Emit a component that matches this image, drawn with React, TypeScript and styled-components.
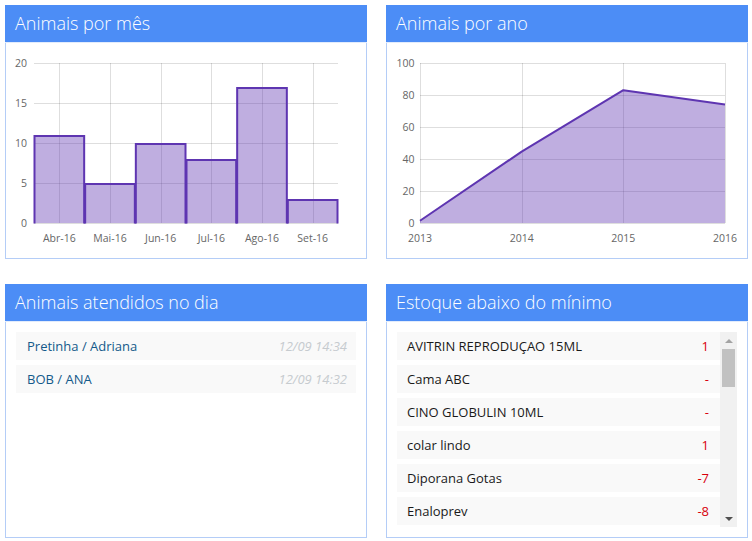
import React from "react";
import styled, { createGlobalStyle } from "styled-components";

const Global = createGlobalStyle`
  html, body { margin: 0; padding: 0; background: #fff; }
  body { font-family: "Open Sans", "Liberation Sans", sans-serif; }
  * { box-sizing: border-box; }
`;

const Page = styled.div`
  display: grid;
  grid-template-columns: 362px 362px;
  grid-auto-rows: 254px;
  column-gap: 19px;
  row-gap: 25px;
  padding: 5px;
`;

const Panel = styled.section`
  display: flex;
  flex-direction: column;
  height: 254px;
`;

const Header = styled.header`
  height: 38px;
  background: #4c8df6;
  border-bottom: 1px solid #e2ecfc;
  color: #fff;
  font-size: 18px;
  line-height: 37px;
  padding-left: 10px;
  font-weight: 300;
  white-space: nowrap;
`;

const Body = styled.div<{ $pad?: boolean }>`
  flex: 1;
  border: 1px solid #b4cdf7;
  border-top: none;
  padding: ${(p) => (p.$pad ? "10px" : "0")};
  display: flex;
  flex-direction: column;
  min-height: 0;
`;

const ChartSvg = styled.svg`
  display: block;
  font-family: "Open Sans", "Liberation Sans", sans-serif;
  font-size: 10.5px;
`;

const List = styled.div`
  display: flex;
  flex-direction: column;
  gap: 5px;
`;

const Row = styled.div`
  height: 28px;
  background: #f9f9f9;
  display: flex;
  align-items: center;
  justify-content: space-between;
  padding: 0 9px 0 11px;
  font-size: 13px;
  white-space: nowrap;
`;

const PetName = styled.span`
  color: #145a8a;
`;

const Time = styled.span`
  color: #c6cbcf;
  font-style: italic;
`;

const ScrollArea = styled.div`
  height: 195px;
  display: flex;
`;

const ScrollRows = styled.div`
  flex: 1;
  overflow: hidden;
  display: flex;
  flex-direction: column;
  gap: 5px;
`;

const StockRow = styled(Row)`
  flex: none;
  padding: 0 11px 0 10px;
`;

const ItemName = styled.span`
  color: #1a1a1a;
`;

const Qty = styled.span`
  color: #d8000c;
`;

const Scrollbar = styled.div`
  width: 17px;
  background: #f1f1f1;
  display: flex;
  flex-direction: column;
  align-items: center;
`;

const Arrow = styled.div<{ $down?: boolean }>`
  height: 17px;
  width: 17px;
  display: flex;
  align-items: center;
  justify-content: center;
  margin-top: ${(p) => (p.$down ? "auto" : "0")};
  &::after {
    content: "";
    width: 0;
    height: 0;
    border-left: 4px solid transparent;
    border-right: 4px solid transparent;
    ${(p) =>
      p.$down
        ? "border-top: 4px solid #505050;"
        : "border-bottom: 4px solid #a3a3a3;"}
  }
`;

const Thumb = styled.div`
  width: 13px;
  height: 38px;
  background: #c1c1c1;
`;

const PURPLE = "#5e35b1";
const FILL = "rgba(94,53,177,0.4)";
const GRID = "rgba(0,0,0,0.13)";
const TXT = "#666";

const months = [
  { l: "Abr-16", v: 11 },
  { l: "Mai-16", v: 5 },
  { l: "Jun-16", v: 10 },
  { l: "Jul-16", v: 8 },
  { l: "Ago-16", v: 17 },
  { l: "Set-16", v: 3 },
];

function MonthChart() {
  const x0 = 28;
  const x1 = 332;
  const y0 = 180;
  const top = 20;
  const bw = (x1 - x0) / months.length;
  const ticks = [0, 5, 10, 15, 20];
  return (
    <ChartSvg width={360} height={215} viewBox="0 0 360 215">
      {ticks.map((t) => {
        const y = y0 - t * 8 + 0.5;
        return (
          <g key={t}>
            <line x1={x0} x2={x1} y1={y} y2={y} stroke={GRID} />
            <text x={21} y={y + 3.5} textAnchor="end" fill={TXT}>
              {t}
            </text>
          </g>
        );
      })}
      {months.map((m, i) => {
        const cx = Math.round(x0 + bw * (i + 0.5)) + 0.5;
        return (
          <line key={m.l} x1={cx} x2={cx} y1={top} y2={y0} stroke={GRID} />
        );
      })}
      {months.map((m, i) => {
        const l = x0 + bw * i + 0.5;
        const r = x0 + bw * (i + 1) - 0.5;
        const t = y0 - m.v * 8 + 1;
        return (
          <g key={m.l}>
            <rect x={l} y={t} width={r - l} height={y0 - t} fill={FILL} />
            <path
              d={`M${l} ${y0 + 0.5} L${l} ${t} L${r} ${t} L${r} ${y0 + 0.5}`}
              fill="none"
              stroke={PURPLE}
              strokeWidth={2}
            />
          </g>
        );
      })}
      {months.map((m, i) => (
        <text
          key={m.l}
          x={x0 + bw * (i + 0.5)}
          y={199}
          textAnchor="middle"
          fill={TXT}
        >
          {m.l}
        </text>
      ))}
    </ChartSvg>
  );
}

const years = [
  { l: "2013", v: 1.4 },
  { l: "2014", v: 44.6 },
  { l: "2015", v: 83 },
  { l: "2016", v: 74 },
];

function YearChart() {
  const x0 = 33;
  const x1 = 338;
  const y0 = 180;
  const top = 20;
  const step = (x1 - x0) / (years.length - 1);
  const ticks = [0, 20, 40, 60, 80, 100];
  const pts = years.map((y, i) => [x0 + step * i, y0 - y.v * 1.6]);
  const line = pts.map((p, i) => `${i ? "L" : "M"}${p[0]} ${p[1]}`).join(" ");
  const area = `${line} L${x1} ${y0} L${x0} ${y0} Z`;
  return (
    <ChartSvg width={360} height={215} viewBox="0 0 360 215">
      {ticks.map((t) => {
        const y = Math.round(y0 - t * 1.6) + 0.5;
        return (
          <g key={t}>
            <line x1={x0} x2={x1} y1={y} y2={y} stroke={GRID} />
            <text x={27.5} y={y + 3.5} textAnchor="end" fill={TXT}>
              {t}
            </text>
          </g>
        );
      })}
      {years.map((yr, i) => {
        const cx = Math.round(x0 + step * i) + 0.5;
        return (
          <g key={yr.l}>
            <line x1={cx} x2={cx} y1={top} y2={y0} stroke={GRID} />
            <text x={x0 + step * i} y={199} textAnchor="middle" fill={TXT}>
              {yr.l}
            </text>
          </g>
        );
      })}
      <path d={area} fill={FILL} />
      <path
        d={line}
        fill="none"
        stroke={PURPLE}
        strokeWidth={2}
        strokeLinejoin="round"
      />
    </ChartSvg>
  );
}

const visits = [
  { n: "Pretinha / Adriana", t: "12/09 14:34" },
  { n: "BOB / ANA", t: "12/09 14:32" },
];

const stock = [
  { n: "AVITRIN REPRODUÇAO 15ML", q: "1" },
  { n: "Cama ABC", q: "-" },
  { n: "CINO GLOBULIN 10ML", q: "-" },
  { n: "colar lindo", q: "1" },
  { n: "Diporana Gotas", q: "-7" },
  { n: "Enaloprev", q: "-8" },
];

export default function App() {
  return (
    <>
      <Global />
      <Page>
        <Panel>
          <Header>Animais por mês</Header>
          <Body>
            <MonthChart />
          </Body>
        </Panel>
        <Panel>
          <Header>Animais por ano</Header>
          <Body>
            <YearChart />
          </Body>
        </Panel>
        <Panel>
          <Header>Animais atendidos no dia</Header>
          <Body $pad>
            <List>
              {visits.map((v) => (
                <Row key={v.n}>
                  <PetName>{v.n}</PetName>
                  <Time>{v.t}</Time>
                </Row>
              ))}
            </List>
          </Body>
        </Panel>
        <Panel>
          <Header>Estoque abaixo do mínimo</Header>
          <Body $pad>
            <ScrollArea>
              <ScrollRows>
                {stock.map((s) => (
                  <StockRow key={s.n}>
                    <ItemName>{s.n}</ItemName>
                    <Qty>{s.q}</Qty>
                  </StockRow>
                ))}
              </ScrollRows>
              <Scrollbar>
                <Arrow />
                <Thumb />
                <Arrow $down />
              </Scrollbar>
            </ScrollArea>
          </Body>
        </Panel>
      </Page>
    </>
  );
}
